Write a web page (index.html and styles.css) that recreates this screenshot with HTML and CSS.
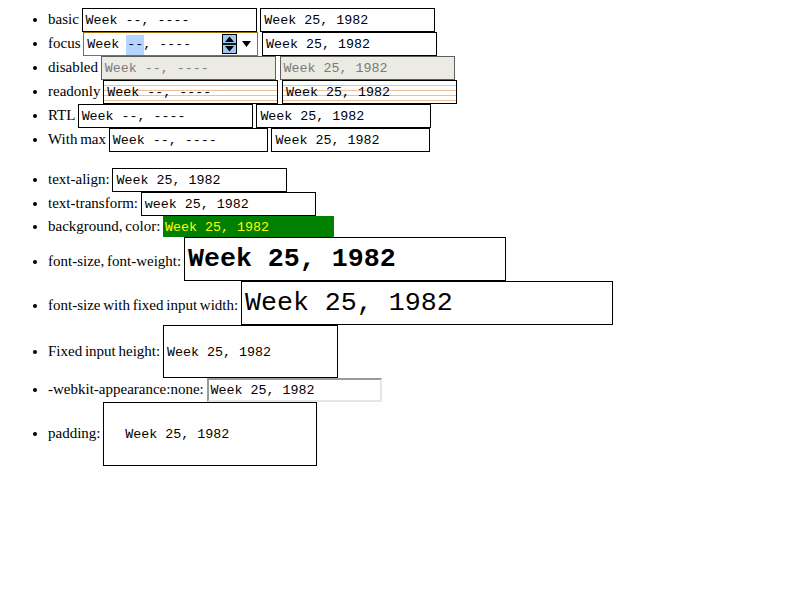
FILE: index.html
```html
<!DOCTYPE html>
<html>
<head>
<meta charset="utf-8">
<link rel="stylesheet" href="styles.css">
</head>
<body>
<ul class="list">
  <li><span class="label">basic </span><span class="week">Week --, ----</span> <span class="week">Week 25, 1982</span></li>
  <li><span class="label">focus </span><span class="week focus"><span class="val">Week <span class="sel">--</span>, ----</span><span class="spin"><svg width="15" height="20" viewBox="0 0 15 20"><rect x="0.5" y="0.5" width="14" height="19" fill="#9ec8f4" stroke="#000"/><polygon points="7.5,2.5 12,8 3,8" fill="#000"/><rect x="1" y="9" width="13" height="2" fill="#1a1a1a"/><polygon points="3,12 12,12 7.5,17.5" fill="#000"/></svg></span><span class="drop"><svg width="9" height="6" viewBox="0 0 9 6"><polygon points="0,0 9,0 4.5,6" fill="#000"/></svg></span></span> <span class="week">Week 25, 1982</span></li>
  <li><span class="label">disabled </span><span class="week disabled">Week --, ----</span> <span class="week disabled">Week 25, 1982</span></li>
  <li><span class="label">readonly </span><span class="week readonly">Week --, ----</span> <span class="week readonly">Week 25, 1982</span></li>
  <li><span class="label">RTL </span><span class="week">Week --, ----</span> <span class="week">Week 25, 1982</span></li>
  <li><span class="label">With max </span><span class="week narrow">Week --, ----</span> <span class="week narrow">Week 25, 1982</span></li>
</ul>
<ul class="list list-second">
  <li><span class="label">text-align: </span><span class="week">Week 25, 1982</span></li>
  <li><span class="label">text-transform: </span><span class="week lower">Week 25, 1982</span></li>
  <li><span class="label">background, color: </span><span class="week colored">Week 25, 1982</span></li>
  <li><span class="label">font-size, font-weight: </span><span class="week big bold">Week 25, 1982</span></li>
  <li><span class="label">font-size with fixed input width: </span><span class="week big wide">Week 25, 1982</span></li>
  <li><span class="label">Fixed input height: </span><span class="week tall">Week 25, 1982</span></li>
  <li><span class="label">-webkit-appearance:none: </span><span class="week plain">Week 25, 1982</span></li>
  <li><span class="label">padding: </span><span class="week padded">Week 25, 1982</span></li>
</ul>
</body>
</html>
```
FILE: styles.css
```css
body {
  margin: 8px;
  font-family: "Liberation Serif", "Times New Roman", serif;
  font-size: 15px;
  color: #000;
  background: #fff;
}

.list {
  margin: 0;
  padding-left: 40px;
  list-style: disc;
}

.list-second {
  margin-top: 16px;
}

.label {
  word-spacing: -1px;
}

.week {
  display: inline-block;
  box-sizing: border-box;
  width: 175px;
  height: 24px;
  border: 1px solid #000;
  padding: 0 3px;
  font-family: "Liberation Mono", "Courier New", monospace;
  font-size: 13.33px;
  line-height: 23px;
  white-space: pre;
  vertical-align: baseline;
  background: #fff;
  color: #000;
}

.focus {
  display: inline-flex;
  align-items: flex-start;
  padding-right: 0;
  border-color: #9a6b14;
}

.val {
  flex: 1;
}

.sel {
  background: #b4d5fe;
  padding: 2px 1px 3px;
  margin: 0 -1px;
}

.spin {
  display: flex;
  align-self: center;
  width: 15px;
  height: 20px;
  margin-right: 5px;
}

.drop {
  display: flex;
  align-self: center;
  width: 9px;
  height: 6px;
  margin-right: 6px;
}

.disabled {
  background: #ebebe4;
  color: #7a7a7a;
  border-color: #5e5e5e;
}

.readonly {
  background: repeating-linear-gradient(to bottom, #fff 0, #fff 4px, #f0bf96 4px, #f0bf96 5px);
}

.narrow {
  width: 159px;
}

.lower {
  text-transform: lowercase;
}

.colored {
  width: 171px;
  height: 21px;
  border: none;
  padding: 1px 2px 0;
  line-height: 21px;
  background: #008000;
  color: #ffff00;
}

.big {
  width: 322px;
  height: 44px;
  padding: 2px 3px 0;
  font-size: 26.67px;
  line-height: 39px;
}

.bold {
  font-weight: bold;
}

.wide {
  width: 372px;
}

.tall {
  height: 53px;
  padding-top: 2px;
  line-height: 49px;
}

.plain {
  border-width: 2px;
  border-style: solid;
  border-color: #9a9a9a #e6e6e6 #e6e6e6 #9a9a9a;
  padding: 0 2px;
  line-height: 21px;
}

.padded {
  width: 214px;
  height: 64px;
  padding: 20px 20px 20px 21px;
}
```
